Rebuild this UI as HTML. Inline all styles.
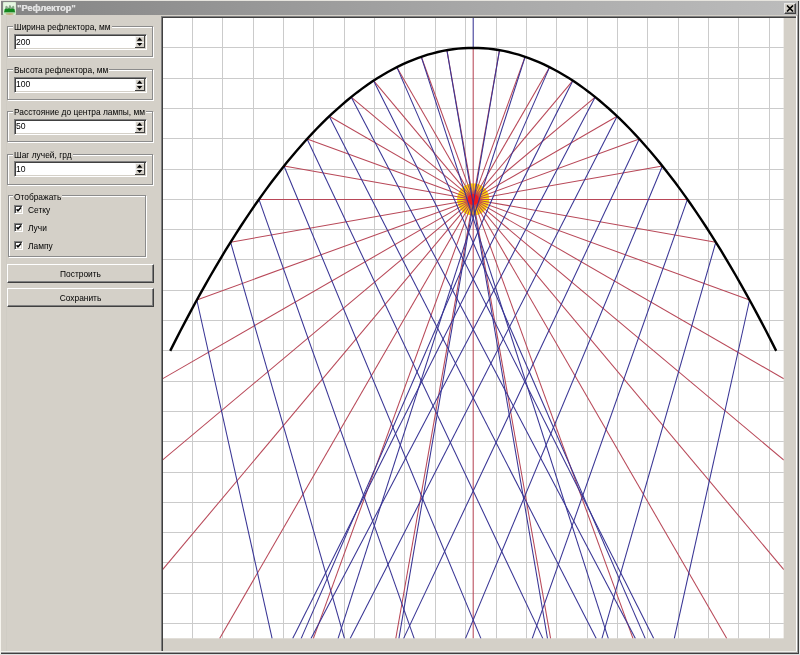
<!DOCTYPE html>
<html><head><meta charset="utf-8">
<style>
*{box-sizing:border-box}
html,body{margin:0;padding:0}
body{width:800px;height:655px;overflow:hidden;position:relative;background:#d4d0c8;font-family:"Liberation Sans",sans-serif;font-size:8.4px;color:#000}
.a{position:absolute}
.cap,.etx,.lbl,.btn,.ttl{will-change:transform}
.tb{left:1px;top:1px;width:798px;height:14px;background:linear-gradient(to right,#848484 0%,#a8a8a8 60%,#bcbcbc 100%)}
.ttl{left:16.5px;top:1.5px;font-weight:bold;font-size:9.2px;color:#e2e2e2;white-space:nowrap;line-height:12px;text-shadow:0.35px 0 0 #e2e2e2}
.close{left:783.5px;top:3px;width:12px;height:11px;background:#d4d0c8;border-top:1px solid #e8e8e8;border-left:1px solid #e8e8e8;border-right:1px solid #404040;border-bottom:1px solid #404040;box-shadow:inset -1px -1px 0 #808080}
.grp{border:1px solid #8c8c8c;box-shadow:inset 1px 1px 0 #fff, 1px 1px 0 #fff}
.cap{background:#d4d0c8;padding:0 1px;white-space:nowrap;line-height:10px}
.edit{background:#fff;border-top:1px solid #808080;border-left:1px solid #808080;border-right:1px solid #fff;border-bottom:1px solid #fff;box-shadow:inset 1px 1px 0 #404040, inset -1px -1px 0 #d4d0c8}
.etx{white-space:nowrap;line-height:10px;font-size:8.6px;transform:scaleY(1.15);transform-origin:0 8px}
.spin{width:10px;background:#d4d0c8;border-right:1px solid #404040;border-bottom:1px solid #404040;box-shadow:inset 1px 1px 0 #f4f4f4}
.sb{position:absolute;left:0;width:9px;height:6px}
.up{top:0}.dn{top:5.5px;border-top:1px solid #f4f4f4}
.tri{position:absolute;left:1.5px;width:0;height:0;border-left:3px solid transparent;border-right:3px solid transparent}
.tri.u{top:1.8px;border-bottom:2.8px solid #000}
.tri.d{top:1.2px;border-top:2.8px solid #000}
.cb{width:9px;height:9px;background:#fff;border-top:1px solid #808080;border-left:1px solid #808080;border-right:1px solid #fff;border-bottom:1px solid #fff;box-shadow:inset 1px 1px 0 #404040, inset -1px -1px 0 #d4d0c8}
.lbl{white-space:nowrap;line-height:10px}
.btn{background:#d4d0c8;border-top:1px solid #fff;border-left:1px solid #fff;border-right:1px solid #404040;border-bottom:1px solid #404040;box-shadow:inset -1px -1px 0 #808080;text-align:center;line-height:19px;white-space:nowrap}
</style></head><body>
<!-- outer frame -->
<div class="a" style="left:0;top:0;width:800px;height:1px;background:#e6e4de"></div>
<div class="a" style="left:0;top:0;width:1px;height:655px;background:#f6f4ee"></div>
<div class="a tb"></div>
<!-- icon -->
<svg class="a" style="left:2.5px;top:1.8px" width="13" height="13" viewBox="0 0 13 13">
<rect x="0" y="0" width="13" height="13" rx="1" fill="#e6f6e2"/>
<rect x="0" y="0" width="13" height="13" rx="1" fill="none" stroke="#b8d8b4" stroke-width="0.6"/>
<path d="M2.2 8 L2.4 4.6 Q3.2 3.2 4.4 4.2 L5.2 6.2 L6.2 3.4 Q7 2.6 7.6 3.6 L8.6 5.8 L9.6 4 Q10.6 3.4 11.2 4.4 L11.4 8 Z" fill="#8aa88a"/>
<path d="M1.6 7.2 L3 6.4 L4.4 7 L6 6.2 L7.6 7 L9.2 6.4 L11.6 7.2 L12 10.2 L1.2 10.2 Z" fill="#0e8a1c"/>
<rect x="1.2" y="9.6" width="11" height="0.9" fill="#2a7a2a"/>
<rect x="1.2" y="10.5" width="11" height="1.2" fill="#a8e0a8"/>
<ellipse cx="6.6" cy="12" rx="4" ry="0.9" fill="#c0b080"/>
</svg>
<div class="a ttl">&quot;Рефлектор&quot;</div>
<div class="a close"><svg style="position:absolute;left:1px;top:0.5px" width="8" height="7" viewBox="0 0 8 7"><path d="M1 0.5 L7 6.5 M7 0.5 L1 6.5" stroke="#000" stroke-width="1.6"/></svg></div>

<!-- right/bottom frame -->
<div class="a" style="left:797px;top:15px;width:1px;height:639px;background:#a0a0a0"></div>
<div class="a" style="left:798px;top:1px;width:1px;height:653px;background:#404040"></div>
<div class="a" style="left:799px;top:0;width:1px;height:655px;background:#e8e8e8"></div>
<div class="a" style="left:1px;top:652px;width:797px;height:1px;background:#a0a0a0"></div>
<div class="a" style="left:1px;top:653px;width:798px;height:1px;background:#404040"></div>
<div class="a" style="left:0;top:654px;width:800px;height:1px;background:#e0e0e0"></div>

<!-- canvas container border -->
<div class="a" style="left:161px;top:16px;width:635px;height:1px;background:#808080"></div>
<div class="a" style="left:161px;top:17px;width:635px;height:1px;background:#404040"></div>
<div class="a" style="left:161px;top:16px;width:1px;height:636px;background:#808080"></div>
<div class="a" style="left:162px;top:17px;width:1px;height:635px;background:#404040"></div>
<div class="a" style="left:796px;top:16px;width:1px;height:636px;background:#fff"></div>
<div class="a" style="left:1px;top:651px;width:796px;height:1px;background:#f2f1ec"></div>
<div class="a" style="left:6px;top:16px;width:1px;height:635px;background:#cfccc4"></div>

<svg width="800" height="655" viewBox="0 0 800 655" style="position:absolute;left:0;top:0">
<defs><clipPath id="cp"><rect x="163" y="18" width="620.8" height="620.6"/></clipPath>
<radialGradient id="lg"><stop offset="0" stop-color="#ff0000"/><stop offset="0.4" stop-color="#ff1000"/><stop offset="0.6" stop-color="#ff9000"/><stop offset="0.8" stop-color="#ffe000"/><stop offset="1" stop-color="#ffe000"/></radialGradient></defs>
<g clip-path="url(#cp)">
<rect x="163" y="18" width="620.8" height="620.6" fill="#fff"/>
<g stroke="#cbcbcb" stroke-width="1" shape-rendering="crispEdges"><line x1="192.60" y1="17.5" x2="192.60" y2="638.6"/><line x1="222.94" y1="17.5" x2="222.94" y2="638.6"/><line x1="253.28" y1="17.5" x2="253.28" y2="638.6"/><line x1="283.62" y1="17.5" x2="283.62" y2="638.6"/><line x1="313.96" y1="17.5" x2="313.96" y2="638.6"/><line x1="344.30" y1="17.5" x2="344.30" y2="638.6"/><line x1="374.64" y1="17.5" x2="374.64" y2="638.6"/><line x1="404.98" y1="17.5" x2="404.98" y2="638.6"/><line x1="435.32" y1="17.5" x2="435.32" y2="638.6"/><line x1="465.66" y1="17.5" x2="465.66" y2="638.6"/><line x1="496.00" y1="17.5" x2="496.00" y2="638.6"/><line x1="526.34" y1="17.5" x2="526.34" y2="638.6"/><line x1="556.68" y1="17.5" x2="556.68" y2="638.6"/><line x1="587.02" y1="17.5" x2="587.02" y2="638.6"/><line x1="617.36" y1="17.5" x2="617.36" y2="638.6"/><line x1="647.70" y1="17.5" x2="647.70" y2="638.6"/><line x1="678.04" y1="17.5" x2="678.04" y2="638.6"/><line x1="708.38" y1="17.5" x2="708.38" y2="638.6"/><line x1="738.72" y1="17.5" x2="738.72" y2="638.6"/><line x1="769.06" y1="17.5" x2="769.06" y2="638.6"/><line x1="162.26" y1="47.80" x2="783.8" y2="47.80"/><line x1="162.26" y1="78.10" x2="783.8" y2="78.10"/><line x1="162.26" y1="108.40" x2="783.8" y2="108.40"/><line x1="162.26" y1="138.70" x2="783.8" y2="138.70"/><line x1="162.26" y1="169.00" x2="783.8" y2="169.00"/><line x1="162.26" y1="199.30" x2="783.8" y2="199.30"/><line x1="162.26" y1="229.60" x2="783.8" y2="229.60"/><line x1="162.26" y1="259.90" x2="783.8" y2="259.90"/><line x1="162.26" y1="290.20" x2="783.8" y2="290.20"/><line x1="162.26" y1="320.50" x2="783.8" y2="320.50"/><line x1="162.26" y1="350.80" x2="783.8" y2="350.80"/><line x1="162.26" y1="381.10" x2="783.8" y2="381.10"/><line x1="162.26" y1="411.40" x2="783.8" y2="411.40"/><line x1="162.26" y1="441.70" x2="783.8" y2="441.70"/><line x1="162.26" y1="472.00" x2="783.8" y2="472.00"/><line x1="162.26" y1="502.30" x2="783.8" y2="502.30"/><line x1="162.26" y1="532.60" x2="783.8" y2="532.60"/><line x1="162.26" y1="562.90" x2="783.8" y2="562.90"/><line x1="162.26" y1="593.20" x2="783.8" y2="593.20"/><line x1="162.26" y1="623.50" x2="783.8" y2="623.50"/></g>
<g stroke="#ffe000" stroke-width="1.7"><line x1="473.20" y1="199.40" x2="489.20" y2="199.40"/><line x1="473.20" y1="199.40" x2="489.14" y2="200.79"/><line x1="473.20" y1="199.40" x2="488.96" y2="202.18"/><line x1="473.20" y1="199.40" x2="488.65" y2="203.54"/><line x1="473.20" y1="199.40" x2="488.24" y2="204.87"/><line x1="473.20" y1="199.40" x2="487.70" y2="206.16"/><line x1="473.20" y1="199.40" x2="487.06" y2="207.40"/><line x1="473.20" y1="199.40" x2="486.31" y2="208.58"/><line x1="473.20" y1="199.40" x2="485.46" y2="209.68"/><line x1="473.20" y1="199.40" x2="484.51" y2="210.71"/><line x1="473.20" y1="199.40" x2="483.48" y2="211.66"/><line x1="473.20" y1="199.40" x2="482.38" y2="212.51"/><line x1="473.20" y1="199.40" x2="481.20" y2="213.26"/><line x1="473.20" y1="199.40" x2="479.96" y2="213.90"/><line x1="473.20" y1="199.40" x2="478.67" y2="214.44"/><line x1="473.20" y1="199.40" x2="477.34" y2="214.85"/><line x1="473.20" y1="199.40" x2="475.98" y2="215.16"/><line x1="473.20" y1="199.40" x2="474.59" y2="215.34"/><line x1="473.20" y1="199.40" x2="473.20" y2="215.40"/><line x1="473.20" y1="199.40" x2="471.81" y2="215.34"/><line x1="473.20" y1="199.40" x2="470.42" y2="215.16"/><line x1="473.20" y1="199.40" x2="469.06" y2="214.85"/><line x1="473.20" y1="199.40" x2="467.73" y2="214.44"/><line x1="473.20" y1="199.40" x2="466.44" y2="213.90"/><line x1="473.20" y1="199.40" x2="465.20" y2="213.26"/><line x1="473.20" y1="199.40" x2="464.02" y2="212.51"/><line x1="473.20" y1="199.40" x2="462.92" y2="211.66"/><line x1="473.20" y1="199.40" x2="461.89" y2="210.71"/><line x1="473.20" y1="199.40" x2="460.94" y2="209.68"/><line x1="473.20" y1="199.40" x2="460.09" y2="208.58"/><line x1="473.20" y1="199.40" x2="459.34" y2="207.40"/><line x1="473.20" y1="199.40" x2="458.70" y2="206.16"/><line x1="473.20" y1="199.40" x2="458.16" y2="204.87"/><line x1="473.20" y1="199.40" x2="457.75" y2="203.54"/><line x1="473.20" y1="199.40" x2="457.44" y2="202.18"/><line x1="473.20" y1="199.40" x2="457.26" y2="200.79"/><line x1="473.20" y1="199.40" x2="457.20" y2="199.40"/><line x1="473.20" y1="199.40" x2="457.26" y2="198.01"/><line x1="473.20" y1="199.40" x2="457.44" y2="196.62"/><line x1="473.20" y1="199.40" x2="457.75" y2="195.26"/><line x1="473.20" y1="199.40" x2="458.16" y2="193.93"/><line x1="473.20" y1="199.40" x2="458.70" y2="192.64"/><line x1="473.20" y1="199.40" x2="459.34" y2="191.40"/><line x1="473.20" y1="199.40" x2="460.09" y2="190.22"/><line x1="473.20" y1="199.40" x2="460.94" y2="189.12"/><line x1="473.20" y1="199.40" x2="461.89" y2="188.09"/><line x1="473.20" y1="199.40" x2="462.92" y2="187.14"/><line x1="473.20" y1="199.40" x2="464.02" y2="186.29"/><line x1="473.20" y1="199.40" x2="465.20" y2="185.54"/><line x1="473.20" y1="199.40" x2="466.44" y2="184.90"/><line x1="473.20" y1="199.40" x2="467.73" y2="184.36"/><line x1="473.20" y1="199.40" x2="469.06" y2="183.95"/><line x1="473.20" y1="199.40" x2="470.42" y2="183.64"/><line x1="473.20" y1="199.40" x2="471.81" y2="183.46"/><line x1="473.20" y1="199.40" x2="473.20" y2="183.40"/><line x1="473.20" y1="199.40" x2="474.59" y2="183.46"/><line x1="473.20" y1="199.40" x2="475.98" y2="183.64"/><line x1="473.20" y1="199.40" x2="477.34" y2="183.95"/><line x1="473.20" y1="199.40" x2="478.67" y2="184.36"/><line x1="473.20" y1="199.40" x2="479.96" y2="184.90"/><line x1="473.20" y1="199.40" x2="481.20" y2="185.54"/><line x1="473.20" y1="199.40" x2="482.38" y2="186.29"/><line x1="473.20" y1="199.40" x2="483.48" y2="187.14"/><line x1="473.20" y1="199.40" x2="484.51" y2="188.09"/><line x1="473.20" y1="199.40" x2="485.46" y2="189.12"/><line x1="473.20" y1="199.40" x2="486.31" y2="190.22"/><line x1="473.20" y1="199.40" x2="487.06" y2="191.40"/><line x1="473.20" y1="199.40" x2="487.70" y2="192.64"/><line x1="473.20" y1="199.40" x2="488.24" y2="193.93"/><line x1="473.20" y1="199.40" x2="488.65" y2="195.26"/><line x1="473.20" y1="199.40" x2="488.96" y2="196.62"/><line x1="473.20" y1="199.40" x2="489.14" y2="198.01"/></g>
<circle cx="473.20" cy="199.40" r="12.5" fill="url(#lg)"/>
<g stroke="#b84858" stroke-width="1.05"><line x1="473.20" y1="199.40" x2="687.45" y2="199.40"/><line x1="473.20" y1="199.40" x2="715.83" y2="242.18"/><line x1="473.20" y1="199.40" x2="749.58" y2="299.99"/><line x1="473.20" y1="199.40" x2="783.80" y2="378.72"/><line x1="473.20" y1="199.40" x2="783.80" y2="460.02"/><line x1="473.20" y1="199.40" x2="783.80" y2="569.56"/><line x1="473.20" y1="199.40" x2="726.77" y2="638.60"/><line x1="473.20" y1="199.40" x2="633.06" y2="638.60"/><line x1="473.20" y1="199.40" x2="550.64" y2="638.60"/><line x1="473.20" y1="199.40" x2="473.20" y2="638.60"/><line x1="473.20" y1="199.40" x2="395.76" y2="638.60"/><line x1="473.20" y1="199.40" x2="313.34" y2="638.60"/><line x1="473.20" y1="199.40" x2="219.63" y2="638.60"/><line x1="473.20" y1="199.40" x2="162.26" y2="569.96"/><line x1="473.20" y1="199.40" x2="162.26" y2="460.31"/><line x1="473.20" y1="199.40" x2="162.26" y2="378.92"/><line x1="473.20" y1="199.40" x2="196.82" y2="299.99"/><line x1="473.20" y1="199.40" x2="230.57" y2="242.18"/><line x1="473.20" y1="199.40" x2="258.95" y2="199.40"/><line x1="473.20" y1="199.40" x2="284.00" y2="166.04"/><line x1="473.20" y1="199.40" x2="307.11" y2="138.95"/><line x1="473.20" y1="199.40" x2="329.25" y2="116.29"/><line x1="473.20" y1="199.40" x2="351.20" y2="97.03"/><line x1="473.20" y1="199.40" x2="373.57" y2="80.66"/><line x1="473.20" y1="199.40" x2="396.84" y2="67.14"/><line x1="473.20" y1="199.40" x2="421.29" y2="56.79"/><line x1="473.20" y1="199.40" x2="446.89" y2="50.18"/><line x1="473.20" y1="199.40" x2="473.20" y2="47.90"/><line x1="473.20" y1="199.40" x2="499.51" y2="50.18"/><line x1="473.20" y1="199.40" x2="525.11" y2="56.79"/><line x1="473.20" y1="199.40" x2="549.56" y2="67.14"/><line x1="473.20" y1="199.40" x2="572.83" y2="80.66"/><line x1="473.20" y1="199.40" x2="595.20" y2="97.03"/><line x1="473.20" y1="199.40" x2="617.15" y2="116.29"/><line x1="473.20" y1="199.40" x2="639.29" y2="138.95"/><line x1="473.20" y1="199.40" x2="662.40" y2="166.04"/></g>
<circle cx="473.20" cy="199.40" r="5.5" fill="#ff1010" opacity="0.85"/>
<g stroke="#383494" stroke-width="1.05"><line x1="687.45" y1="199.40" x2="532.17" y2="638.60"/><line x1="715.83" y1="242.18" x2="601.88" y2="638.60"/><line x1="749.58" y1="299.99" x2="674.26" y2="638.60"/><line x1="196.82" y1="299.99" x2="272.14" y2="638.60"/><line x1="230.57" y1="242.18" x2="344.52" y2="638.60"/><line x1="258.95" y1="199.40" x2="414.23" y2="638.60"/><line x1="284.00" y1="166.04" x2="480.98" y2="638.60"/><line x1="307.11" y1="138.95" x2="542.89" y2="638.60"/><line x1="329.25" y1="116.29" x2="596.22" y2="638.60"/><line x1="351.20" y1="97.03" x2="635.40" y2="638.60"/><line x1="373.57" y1="80.66" x2="653.71" y2="638.60"/><line x1="396.84" y1="67.14" x2="645.29" y2="638.60"/><line x1="421.29" y1="56.79" x2="608.36" y2="638.60"/><line x1="446.89" y1="50.18" x2="547.51" y2="638.60"/><line x1="473.20" y1="47.90" x2="473.20" y2="17.50"/><line x1="499.51" y1="50.18" x2="398.89" y2="638.60"/><line x1="525.11" y1="56.79" x2="338.04" y2="638.60"/><line x1="549.56" y1="67.14" x2="301.11" y2="638.60"/><line x1="572.83" y1="80.66" x2="292.69" y2="638.60"/><line x1="595.20" y1="97.03" x2="311.00" y2="638.60"/><line x1="617.15" y1="116.29" x2="350.18" y2="638.60"/><line x1="639.29" y1="138.95" x2="403.51" y2="638.60"/><line x1="662.40" y1="166.04" x2="465.42" y2="638.60"/></g>
<path d="M170.20,350.90 L175.25,340.88 L180.30,331.04 L185.35,321.36 L190.40,311.85 L195.45,302.50 L200.50,293.33 L205.55,284.32 L210.60,275.49 L215.65,266.82 L220.70,258.32 L225.75,249.98 L230.80,241.82 L235.85,233.82 L240.90,226.00 L245.95,218.34 L251.00,210.85 L256.05,203.52 L261.10,196.37 L266.15,189.38 L271.20,182.57 L276.25,175.92 L281.30,169.44 L286.35,163.12 L291.40,156.98 L296.45,151.00 L301.50,145.20 L306.55,139.56 L311.60,134.09 L316.65,128.78 L321.70,123.65 L326.75,118.68 L331.80,113.89 L336.85,109.26 L341.90,104.80 L346.95,100.50 L352.00,96.38 L357.05,92.42 L362.10,88.64 L367.15,85.02 L372.20,81.57 L377.25,78.28 L382.30,75.17 L387.35,72.22 L392.40,69.45 L397.45,66.84 L402.50,64.40 L407.55,62.12 L412.60,60.02 L417.65,58.08 L422.70,56.32 L427.75,54.72 L432.80,53.29 L437.85,52.02 L442.90,50.93 L447.95,50.00 L453.00,49.25 L458.05,48.66 L463.10,48.24 L468.15,47.98 L473.20,47.90 L478.25,47.98 L483.30,48.24 L488.35,48.66 L493.40,49.25 L498.45,50.00 L503.50,50.93 L508.55,52.02 L513.60,53.29 L518.65,54.72 L523.70,56.32 L528.75,58.08 L533.80,60.02 L538.85,62.12 L543.90,64.40 L548.95,66.84 L554.00,69.45 L559.05,72.22 L564.10,75.17 L569.15,78.28 L574.20,81.57 L579.25,85.02 L584.30,88.64 L589.35,92.42 L594.40,96.38 L599.45,100.50 L604.50,104.80 L609.55,109.26 L614.60,113.89 L619.65,118.68 L624.70,123.65 L629.75,128.78 L634.80,134.09 L639.85,139.56 L644.90,145.20 L649.95,151.00 L655.00,156.98 L660.05,163.12 L665.10,169.44 L670.15,175.92 L675.20,182.57 L680.25,189.38 L685.30,196.37 L690.35,203.52 L695.40,210.85 L700.45,218.34 L705.50,226.00 L710.55,233.82 L715.60,241.82 L720.65,249.98 L725.70,258.32 L730.75,266.82 L735.80,275.49 L740.85,284.32 L745.90,293.33 L750.95,302.50 L756.00,311.85 L761.05,321.36 L766.10,331.04 L771.15,340.88 L776.20,350.90" fill="none" stroke="#000" stroke-width="2.4"/>
</g>
</svg>

<!-- group 1 -->
<div class="a grp" style="left:7px;top:26px;width:146px;height:31px"></div>
<div class="a cap" style="left:13px;top:22px">Ширина рефлектора, мм</div>
<div class="a edit" style="left:14px;top:34px;width:133px;height:16px"></div>
<div class="a etx" style="left:16px;top:36.5px">200</div>
<div class="a spin" style="left:135px;top:36px;height:12px"><div class="sb dn"></div><svg style="position:absolute;left:0;top:0" width="10" height="12" viewBox="0 0 10 12"><path d="M1.8 4.7 L4.6 1.5 L7.4 4.7 Z M1.8 6.9 L7.4 6.9 L4.6 10 Z" fill="#000"/></svg></div>

<!-- group 2 -->
<div class="a grp" style="left:7px;top:69px;width:146px;height:31px"></div>
<div class="a cap" style="left:13px;top:64.5px">Высота рефлектора, мм</div>
<div class="a edit" style="left:14px;top:76.5px;width:133px;height:16px"></div>
<div class="a etx" style="left:16px;top:78.5px">100</div>
<div class="a spin" style="left:135px;top:78.5px;height:12px"><div class="sb dn"></div><svg style="position:absolute;left:0;top:0" width="10" height="12" viewBox="0 0 10 12"><path d="M1.8 4.7 L4.6 1.5 L7.4 4.7 Z M1.8 6.9 L7.4 6.9 L4.6 10 Z" fill="#000"/></svg></div>

<!-- group 3 -->
<div class="a grp" style="left:7px;top:111px;width:146px;height:31px"></div>
<div class="a cap" style="left:13px;top:106.5px">Расстояние до центра лампы, мм</div>
<div class="a edit" style="left:14px;top:118.5px;width:133px;height:16px"></div>
<div class="a etx" style="left:16px;top:121px">50</div>
<div class="a spin" style="left:135px;top:120.5px;height:12px"><div class="sb dn"></div><svg style="position:absolute;left:0;top:0" width="10" height="12" viewBox="0 0 10 12"><path d="M1.8 4.7 L4.6 1.5 L7.4 4.7 Z M1.8 6.9 L7.4 6.9 L4.6 10 Z" fill="#000"/></svg></div>

<!-- group 4 -->
<div class="a grp" style="left:7px;top:154px;width:146px;height:31px"></div>
<div class="a cap" style="left:13px;top:149.5px">Шаг лучей, грд</div>
<div class="a edit" style="left:14px;top:161px;width:133px;height:16px"></div>
<div class="a etx" style="left:16px;top:163.5px">10</div>
<div class="a spin" style="left:135px;top:163px;height:12px"><div class="sb dn"></div><svg style="position:absolute;left:0;top:0" width="10" height="12" viewBox="0 0 10 12"><path d="M1.8 4.7 L4.6 1.5 L7.4 4.7 Z M1.8 6.9 L7.4 6.9 L4.6 10 Z" fill="#000"/></svg></div>

<!-- group 5 -->
<div class="a grp" style="left:8px;top:195px;width:138px;height:62px"></div>
<div class="a cap" style="left:13px;top:192px">Отображать</div>
<div class="a cb" style="left:14px;top:205px"><svg style="position:absolute;left:0px;top:0px" width="7" height="7" viewBox="0 0 7 7"><path d="M1.6 3.2 L3 4.8 L6 1.6" fill="none" stroke="#000" stroke-width="1.5"/></svg></div>
<div class="a lbl" style="left:28px;top:205px">Сетку</div>
<div class="a cb" style="left:14px;top:223px"><svg style="position:absolute;left:0px;top:0px" width="7" height="7" viewBox="0 0 7 7"><path d="M1.6 3.2 L3 4.8 L6 1.6" fill="none" stroke="#000" stroke-width="1.5"/></svg></div>
<div class="a lbl" style="left:28px;top:223px">Лучи</div>
<div class="a cb" style="left:14px;top:241px"><svg style="position:absolute;left:0px;top:0px" width="7" height="7" viewBox="0 0 7 7"><path d="M1.6 3.2 L3 4.8 L6 1.6" fill="none" stroke="#000" stroke-width="1.5"/></svg></div>
<div class="a lbl" style="left:28px;top:241px">Лампу</div>

<!-- buttons -->
<div class="a btn" style="left:7px;top:264px;width:147px;height:19px">Построить</div>
<div class="a btn" style="left:7px;top:288px;width:147px;height:19px">Сохранить</div>
</body></html>
